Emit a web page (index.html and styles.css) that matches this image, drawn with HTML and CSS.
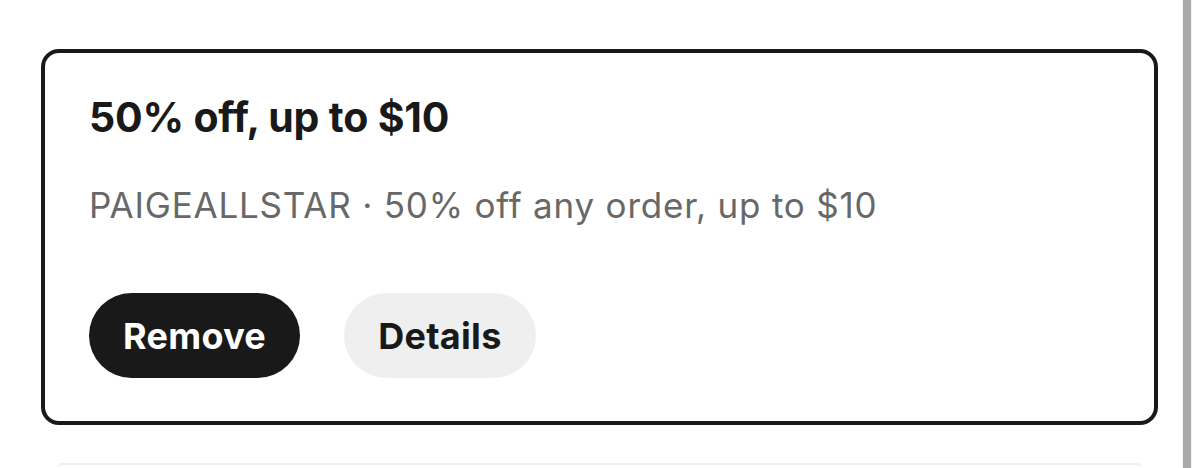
FILE: index.html
```html
<!DOCTYPE html>
<html>
<head>
<meta charset="utf-8">
<link rel="stylesheet" href="styles.css">
</head>
<body>
<div class="viewport">
  <main class="content">
    <section class="promo-card">
      <h2 class="promo-title">50% off, up to $10</h2>
      <p class="promo-desc">PAIGEALLSTAR · 50% off any order, up to $10</p>
      <div class="actions">
        <button class="btn btn-dark">Remove</button>
        <button class="btn btn-light">Details</button>
      </div>
    </section>
    <div class="next-card"></div>
  </main>
  <div class="scrollbar"><div class="thumb"></div></div>
  <div class="gutter"></div>
</div>
</body>
</html>
```
FILE: styles.css
```css
html, body {
  margin: 0;
  padding: 0;
  background: #ffffff;
  height: 468px;
  overflow: hidden;
}
.viewport {
  display: flex;
  height: 468px;
  font-family: Inter, "Noto Sans", sans-serif;
  color: #191919;
}
.content {
  flex: 1;
  padding: 49px 24px 0 41px;
  display: flex;
  flex-direction: column;
}
.promo-card {
  box-sizing: border-box;
  flex-shrink: 0;
  height: 376px;
  border: 4px solid #191919;
  border-radius: 18px;
  padding: 38px 44px 0 44px;
}
.promo-title {
  margin: 0;
  font-size: 41px;
  font-weight: 700;
  line-height: 52px;
  letter-spacing: -0.2px;
}
.promo-desc {
  margin: 42px 0 0 0;
  font-size: 35px;
  font-weight: 400;
  line-height: 40px;
  letter-spacing: 0.8px;
  color: #686868;
}
.actions {
  display: flex;
  gap: 44px;
  margin-top: 68px;
}
.btn {
  height: 85px;
  border: none;
  border-radius: 43px;
  padding: 0 34px;
  font-family: Inter, "Noto Sans", sans-serif;
  font-size: 36px;
  font-weight: 700;
  letter-spacing: 0.3px;
}
.btn-dark {
  background: #191919;
  color: #ffffff;
}
.btn-light {
  background: #efefef;
  color: #191919;
}
.next-card {
  flex-shrink: 0;
  margin: 38px 16px 0 16px;
  height: 3px;
  border-radius: 18px 18px 0 0;
  border-top: 2px solid #f0f0f0;
}
.scrollbar {
  width: 10px;
  background: #f4f4f4;
  display: flex;
  justify-content: center;
}
.thumb {
  width: 8px;
  background: #a9a9a9;
}
.gutter {
  width: 8px;
  background: #ffffff;
}
```
